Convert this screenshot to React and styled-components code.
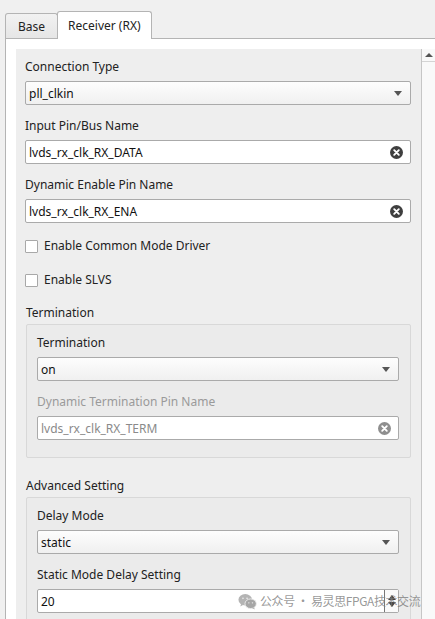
import React from 'react'
import styled, { createGlobalStyle } from 'styled-components'

const Global = createGlobalStyle`
  html, body {
    margin: 0;
    padding: 0;
    height: 619px;
    overflow: hidden;
    background: #f0f0f0;
    font-family: "Noto Sans", "Noto Sans CJK SC", sans-serif;
    font-size: 12px;
    color: #222;
  }
`

const Page = styled.div`
  position: relative;
  height: 619px;
  overflow: hidden;
`

const TabBar = styled.div`
  display: flex;
  align-items: flex-end;
  height: 38px;
  padding-left: 5px;
`

const Tab = styled.div`
  box-sizing: border-box;
  height: ${p => (p.active ? 28 : 25)}px;
  padding: 0 ${p => (p.active ? 10 : 12)}px;
  display: flex;
  align-items: center;
  justify-content: center;
  font-size: 12px;
  background: ${p => (p.active ? '#fff' : 'linear-gradient(#f2f2f2, #e6e6e6)')};
  border: 1px solid #b4b4b4;
  border-bottom: none;
  border-radius: 3px 3px 0 0;
  margin-left: ${p => (p.active ? '-1px' : '0')};
  margin-bottom: ${p => (p.active ? '-1px' : '0')};
  position: relative;
  z-index: ${p => (p.active ? 2 : 1)};
  ${p => p.active && 'padding-bottom: 1px;'}
`

const Pane = styled.div`
  box-sizing: border-box;
  margin-left: 5px;
  border-top: 1px solid #b4b4b4;
  border-left: 1px solid #b4b4b4;
  background: #fff;
  padding: 10px 0 0 10px;
  height: 581px;
  position: relative;
  z-index: 1;
`

const ScrollArea = styled.div`
  display: flex;
  height: 100%;
`

const Content = styled.div`
  flex: 1;
  background: #eeeeee;
  padding: 10px 10px 0 9px;
  display: flex;
  flex-direction: column;
`

const Scrollbar = styled.div`
  width: 13px;
  border-left: 1px solid #c6c6c6;
  background: #f9f9f9;
`

const ScrollButton = styled.div`
  height: 12px;
  border-bottom: 1px solid #d4d4d4;
  display: flex;
  align-items: center;
  justify-content: center;
  &::before {
    content: '';
    border-left: 4px solid transparent;
    border-right: 4px solid transparent;
    border-bottom: 4px solid #555;
  }
`

const Field = styled.div`
  display: flex;
  flex-direction: column;
  gap: 6px;
  margin-bottom: ${p => p.mb ?? 13}px;
`

const Label = styled.div`
  line-height: 16px;
  color: ${p => (p.disabled ? '#9a9a9a' : '#222')};
`

const Control = styled.div`
  box-sizing: border-box;
  height: 24px;
  border: 1px solid #aaa;
  border-radius: 2px;
  display: flex;
  align-items: center;
  padding: 0 4px 0 3px;
  background: ${p => (p.select ? 'linear-gradient(#fdfdfd, #f0f0f0)' : '#fff')};
  color: ${p => (p.disabled ? '#8a8a8a' : '#111')};
  position: relative;
`

const Value = styled.span`
  flex: 1;
`

const Arrow = styled.span`
  margin-right: 4px;
  border-left: 4px solid transparent;
  border-right: 4px solid transparent;
  border-top: 5px solid #555;
`

const Spin = styled.div`
  align-self: stretch;
  width: 13px;
  margin-right: -4px;
  border-left: 1px solid #777;
  display: flex;
  flex-direction: column;
  align-items: center;
  justify-content: center;
  gap: 2px;
  background: #fafafa;
  position: relative;
  z-index: 3;
`

const SpinTri = styled.span`
  border-left: 4px solid transparent;
  border-right: 4px solid transparent;
  ${p => (p.up ? 'border-bottom: 5px solid #444;' : 'border-top: 5px solid #444;')}
`

const CheckRow = styled.label`
  display: flex;
  align-items: center;
  gap: 6px;
  line-height: 16px;
  margin-bottom: ${p => p.mb}px;
`

const Box = styled.span`
  box-sizing: border-box;
  width: 13px;
  height: 13px;
  border: 1px solid #a8a8a8;
  background: #fff;
  border-radius: 1px;
`

const GroupTitle = styled.div`
  line-height: 16px;
  margin: 0 0 3px 1px;
`

const Group = styled.div`
  box-sizing: border-box;
  margin-left: 1px;
  border: 1px solid #d8d8d8;
  border-radius: 2px;
  background: #ebebeb;
  padding: 10px 11px 17px 10px;
  display: flex;
  flex-direction: column;
  margin-bottom: ${p => p.mb ?? 0}px;
`

const Watermark = styled.div`
  position: absolute;
  left: 238px;
  top: 592px;
  display: flex;
  align-items: center;
  gap: 3px;
  white-space: nowrap;
  font-family: "Noto Sans CJK SC", sans-serif;
  font-size: 12px;
  letter-spacing: -0.4px;
  line-height: 18px;
  color: rgba(125, 125, 125, 0.8);
  z-index: 2;
  pointer-events: none;
`

function ClearIcon({ disabled }) {
  return (
    <svg width="13" height="13" viewBox="0 0 13 13" style={{ marginRight: 3 }}>
      <circle cx="6.5" cy="6.5" r="6.5" fill={disabled ? '#8e8e8e' : '#3f3f3f'} />
      <path d="M4.2 4.2 L8.8 8.8 M8.8 4.2 L4.2 8.8" stroke="#fff" strokeWidth="1.9" strokeLinecap="round" />
    </svg>
  )
}

function WeChat() {
  return (
    <svg width="19" height="17" viewBox="0 0 21 18">
      <ellipse cx="8" cy="7" rx="7.5" ry="6.3" fill="#b4b4b4" />
      <path d="M3.5 11.5 L2.5 14.5 L6 12.5 Z" fill="#b4b4b4" />
      <ellipse cx="14" cy="11.5" rx="6.3" ry="5.3" fill="#a6a6a6" stroke="#eee" strokeWidth="1" />
      <path d="M17.5 15.5 L18.8 17.8 L15.5 16.3 Z" fill="#a6a6a6" />
      <circle cx="5.5" cy="5.5" r="0.9" fill="#eee" />
      <circle cx="10" cy="5.5" r="0.9" fill="#eee" />
      <circle cx="12" cy="10.5" r="0.8" fill="#eee" />
      <circle cx="16" cy="10.5" r="0.8" fill="#eee" />
    </svg>
  )
}

function SelectField({ label, value, mb }) {
  return (
    <Field mb={mb}>
      <Label>{label}</Label>
      <Control select>
        <Value>{value}</Value>
        <Arrow />
      </Control>
    </Field>
  )
}

function TextField({ label, value, disabled, mb }) {
  return (
    <Field mb={mb}>
      <Label disabled={disabled}>{label}</Label>
      <Control disabled={disabled}>
        <Value>{value}</Value>
        <ClearIcon disabled={disabled} />
      </Control>
    </Field>
  )
}

export default function App() {
  return (
    <Page>
      <Global />
      <TabBar>
        <Tab>Base</Tab>
        <Tab active>Receiver (RX)</Tab>
      </TabBar>
      <Pane>
        <ScrollArea>
          <Content>
            <SelectField label="Connection Type" value="pll_clkin" />
            <TextField label="Input Pin/Bus Name" value="lvds_rx_clk_RX_DATA" />
            <TextField label="Dynamic Enable Pin Name" value="lvds_rx_clk_RX_ENA" mb={15} />
            <CheckRow mb={18}>
              <Box />
              Enable Common Mode Driver
            </CheckRow>
            <CheckRow mb={17}>
              <Box />
              Enable SLVS
            </CheckRow>
            <GroupTitle>Termination</GroupTitle>
            <Group mb={20}>
              <SelectField label="Termination" value="on" />
              <TextField label="Dynamic Termination Pin Name" value="lvds_rx_clk_RX_TERM" disabled mb={0} />
            </Group>
            <GroupTitle>Advanced Setting</GroupTitle>
            <Group>
              <SelectField label="Delay Mode" value="static" />
              <Field mb={0}>
                <Label>Static Mode Delay Setting</Label>
                <Control>
                  <Value>20</Value>
                  <Spin>
                    <SpinTri up />
                    <SpinTri />
                  </Spin>
                </Control>
              </Field>
            </Group>
          </Content>
          <Scrollbar>
            <ScrollButton />
          </Scrollbar>
        </ScrollArea>
      </Pane>
      <Watermark>
        <WeChat />
        <span>公众号 · 易灵思FPGA技术交流</span>
      </Watermark>
    </Page>
  )
}
